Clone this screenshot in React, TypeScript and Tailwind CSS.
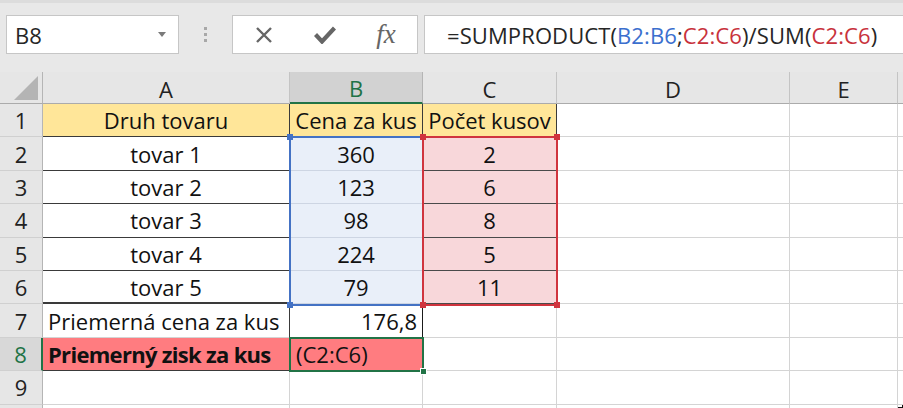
import React from "react";

const F = "font-['Open_Sans',sans-serif]";

function Cell({ className = "", children }: { className?: string; children?: React.ReactNode }) {
  return <div className={`flex items-center overflow-hidden whitespace-nowrap border-r border-b ${className}`}>{children}</div>;
}

export default function App() {
  const grid = "border-[#d4d4d4]";
  const dark = "border-[#3a3a3a]";
  const rowHdr = "justify-center bg-[#e6e6e6] border-r-[#b5b5b5] border-b-[#d0d0d0] text-[#222]";
  const plain = `${grid}`;
  return (
    <div className={`w-[903px] h-[408px] overflow-hidden bg-white ${F} text-[22px] leading-none text-[#111]`}>
      {/* top bar */}
      <div className="h-[72px] bg-[#e8e8e8] border-t-[3px] border-[#dcdcdc] flex items-start pt-[12px]">
        <div className="ml-[6px] w-[173px] h-[39px] bg-white border border-[#c6c6c6] flex items-center pl-[8px] pr-[12px] text-[#262626]">
          <span className="flex-1">B8</span>
          <svg width="8" height="5" viewBox="0 0 8 5"><path d="M0 0H8L4 5Z" fill="#7a7a7a" /></svg>
        </div>
        <div className="w-[53px] h-[39px] flex flex-col items-center justify-center gap-[3px]">
          <div className="w-[3px] h-[3px] bg-[#a8a8a8]" />
          <div className="w-[3px] h-[3px] bg-[#a8a8a8]" />
          <div className="w-[3px] h-[3px] bg-[#a8a8a8]" />
        </div>
        <div className="w-[186px] h-[39px] bg-white border border-[#c6c6c6] flex items-center">
          <div className="w-[62px] flex justify-center">
            <svg width="20" height="20" viewBox="0 0 20 20"><path d="M3 3L17 17M17 3L3 17" stroke="#666" strokeWidth="2.4" /></svg>
          </div>
          <div className="w-[60px] flex justify-center">
            <svg width="22" height="18" viewBox="0 0 22 18"><path d="M1.5 8.5L8 15.5L20.5 2" stroke="#666" strokeWidth="4.2" fill="none" strokeLinejoin="miter" /></svg>
          </div>
          <div className="w-[62px] flex justify-center font-['Liberation_Serif',serif] italic text-[27px] text-[#666]">fx</div>
        </div>
        <div className="ml-[6px] flex-1 h-[39px] bg-white border border-[#c6c6c6] border-r-0 flex items-center pl-[22px] text-[#262626] tracking-[0.1px]">
          <span>=SUMPRODUCT(</span>
          <span className="text-[#3b6fce]">B2:B6</span>
          <span>;</span>
          <span className="text-[#c8323c]">C2:C6</span>
          <span>)/SUM(</span>
          <span className="text-[#c8323c]">C2:C6</span>
          <span>)</span>
        </div>
      </div>

      {/* sheet */}
      <div className="relative grid grid-cols-[43px_247px_133px_134px_233px_108px_1fr] grid-rows-[32px_repeat(9,33.4px)_1fr] h-[336px]">
        {/* header row */}
        <Cell className="bg-[#e6e6e6] border-r-[#b5b5b5] border-b-[#ababab] justify-end items-end pr-[4px] pb-[3px]">
          <svg width="24" height="24" viewBox="0 0 24 24"><path d="M24 0V24H0Z" fill="#b4b4b4" /></svg>
        </Cell>
        <Cell className="bg-[#e6e6e6] border-r-[#c4c4c4] border-b-[#ababab] justify-center pt-[2px] text-[#222]">A</Cell>
        <Cell className="bg-[#d2d2d2] border-r-[#b5b5b5] border-b-2 border-b-[#217346] justify-center pt-[2px] text-[#217346]">B</Cell>
        <Cell className="bg-[#e6e6e6] border-r-[#c4c4c4] border-b-[#ababab] justify-center pt-[2px] text-[#222]">C</Cell>
        <Cell className="bg-[#e6e6e6] border-r-[#c4c4c4] border-b-[#ababab] justify-center pt-[2px] text-[#222]">D</Cell>
        <Cell className="bg-[#e6e6e6] border-r-[#c4c4c4] border-b-[#ababab] justify-center pt-[2px] text-[#222]">E</Cell>
        <Cell className="bg-[#e6e6e6] border-r-0 border-b-[#ababab]" />

        {/* row 1 */}
        <Cell className={rowHdr}>1</Cell>
        <Cell className={`bg-[#ffe699] ${dark} justify-center`}>Druh tovaru</Cell>
        <Cell className={`bg-[#ffe699] ${dark} justify-center`}>Cena za kus</Cell>
        <Cell className={`bg-[#ffe699] ${dark} justify-center`}>Počet kusov</Cell>
        <Cell className={plain} />
        <Cell className={plain} />
        <Cell className={`${plain} border-r-0`} />

        {[
          ["2", "tovar 1", "360", "2"],
          ["3", "tovar 2", "123", "6"],
          ["4", "tovar 3", "98", "8"],
          ["5", "tovar 4", "224", "5"],
          ["6", "tovar 5", "79", "11"],
        ].map(([n, a, b, c]) => (
          <React.Fragment key={n}>
            <Cell className={rowHdr}>{n}</Cell>
            <Cell className={`${n === "6" ? "border-b-2" : ""} border-r-[#d4d4d4] border-b-[#3a3a3a] justify-center`}>{a}</Cell>
            <Cell className="bg-[#e9eff9] border-r-[#d4d4d4] border-b-[#cdd5e3] justify-center">{b}</Cell>
            <Cell className="bg-[#f8d7da] border-r-[#d4d4d4] border-b-[#4a4a4a] justify-center">{c}</Cell>
            <Cell className={plain} />
            <Cell className={plain} />
            <Cell className={`${plain} border-r-0`} />
          </React.Fragment>
        ))}

        {/* row 7 */}
        <Cell className={rowHdr}>7</Cell>
        <Cell className="border-r-[#3a3a3a] border-b-[#d4d4d4] pl-[5px]">Priemerná cena za kus</Cell>
        <Cell className="border-r-[#1a1a1a] border-b-[#d4d4d4] justify-end pr-[5px]">176,8</Cell>
        <Cell className={plain} />
        <Cell className={plain} />
        <Cell className={plain} />
        <Cell className={`${plain} border-r-0`} />

        {/* row 8 */}
        <Cell className="justify-center bg-[#d8d8d8] border-r-2 border-r-[#217346] border-b-[#d0d0d0] text-[#217346]">8</Cell>
        <Cell className="bg-[#ff7c80] border-r-[#3a3a3a] border-b-[#3a3a3a] pl-[5px] font-bold tracking-[-0.7px]">Priemerný zisk za kus</Cell>
        <Cell className="bg-[#ff7c80] border-r-[#d4d4d4] border-b-[#d4d4d4] pl-[6px]">(C2:C6)</Cell>
        <Cell className={plain} />
        <Cell className={plain} />
        <Cell className={plain} />
        <Cell className={`${plain} border-r-0`} />

        {/* row 9 */}
        <Cell className={rowHdr}>9</Cell>
        <Cell className={plain} />
        <Cell className={plain} />
        <Cell className={plain} />
        <Cell className={plain} />
        <Cell className={plain} />
        <Cell className={`${plain} border-r-0`} />

        {/* rest */}
        <Cell className="bg-[#e6e6e6] border-r-[#b5b5b5] border-b-0" />
        <Cell className={`${plain} border-b-0`} />
        <Cell className={`${plain} border-b-0`} />
        <Cell className={`${plain} border-b-0`} />
        <Cell className={`${plain} border-b-0`} />
        <Cell className={`${plain} border-b-0`} />
        <Cell className="border-0" />

        {/* range highlights */}
        <div className="pointer-events-none absolute left-[289px] top-[64px] w-[135px] h-[170px] border-2 border-[#4472c4]" />
        <div className="pointer-events-none absolute left-[287px] top-[62px] w-[6px] h-[6px] bg-[#4472c4]" />
        <div className="pointer-events-none absolute left-[287px] top-[230px] w-[6px] h-[6px] bg-[#4472c4]" />
        <div className="pointer-events-none absolute left-[422px] top-[64px] w-[136px] h-[170px] border-2 border-[#d0343e]" />
        <div className="pointer-events-none absolute left-[420px] top-[62px] w-[6px] h-[6px] bg-[#d0343e]" />
        <div className="pointer-events-none absolute left-[554px] top-[62px] w-[6px] h-[6px] bg-[#d0343e]" />
        <div className="pointer-events-none absolute left-[420px] top-[230px] w-[6px] h-[6px] bg-[#d0343e]" />
        <div className="pointer-events-none absolute left-[554px] top-[230px] w-[6px] h-[6px] bg-[#d0343e]" />
        {/* active cell */}
        <div className="pointer-events-none absolute left-[289px] top-[265px] w-[135px] h-[35px] border-2 border-[#217346]" />
        <div className="pointer-events-none absolute left-[420px] top-[296px] w-[7px] h-[7px] bg-[#217346] border border-white" />
      </div>
    </div>
  );
}
